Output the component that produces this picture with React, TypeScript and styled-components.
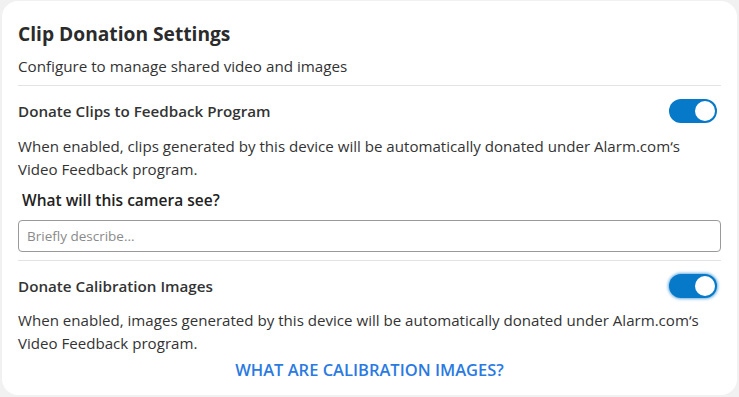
import React, { useState } from 'react';
import styled, { createGlobalStyle } from 'styled-components';

const GlobalStyle = createGlobalStyle`
  html, body {
    margin: 0;
    padding: 0;
    background: #f1f1f1;
  }
  body {
    font-family: "Open Sans", "Noto Sans", Arial, sans-serif;
    color: #333333;
  }
`;

const Card = styled.div`
  margin: 1px 2px 0 2px;
  height: 394px;
  box-sizing: border-box;
  background: #ffffff;
  border-radius: 16px;
  padding: 19px 16px 0 16px;
`;

const Title = styled.h2`
  margin: 0;
  font-size: 19.2px;
  font-weight: 700;
  line-height: 28px;
  color: #2b2b2b;
`;

const Subtitle = styled.p`
  margin: 7px 0 0;
  font-size: 15.2px;
  line-height: 22px;
`;

const Divider = styled.hr<{ top: number }>`
  border: none;
  border-top: 1px solid #e3e3e3;
  margin: ${(p) => p.top}px 0 0;
`;

const SettingRow = styled.div<{ top: number }>`
  display: flex;
  align-items: center;
  justify-content: space-between;
  padding-right: 4px;
  margin-top: ${(p) => p.top}px;
  height: 26px;
`;

const SettingLabel = styled.span`
  font-size: 15.2px;
  font-weight: 600;
  color: #333333;
`;

const Track = styled.button<{ on: boolean; focused?: boolean }>`
  width: 48px;
  height: 24px;
  border: none;
  padding: 0 2px;
  border-radius: 12px;
  background: ${(p) => (p.on ? '#0679c8' : '#bbbbbb')};
  display: flex;
  align-items: center;
  justify-content: ${(p) => (p.on ? 'flex-end' : 'flex-start')};
  cursor: pointer;
  box-shadow: ${(p) => (p.focused ? '0 0 3px 1px rgba(6,121,200,0.6)' : 'none')};
`;

const Knob = styled.span`
  width: 20px;
  height: 20px;
  border-radius: 50%;
  background: #ffffff;
`;

const Description = styled.p<{ top: number }>`
  margin: ${(p) => p.top}px 0 0;
  font-size: 15.1px;
  line-height: 22.5px;
`;

const FieldLabel = styled.label`
  display: block;
  margin: 9px 0 0 4px;
  font-size: 15.5px;
  font-weight: 600;
  line-height: 22px;
  color: #222222;
`;

const TextInput = styled.input`
  display: block;
  box-sizing: border-box;
  width: 100%;
  height: 32px;
  margin-top: 9px;
  padding: 0 8px;
  border: 1px solid #9a9a9a;
  border-radius: 4px;
  font-family: inherit;
  font-size: 13.5px;
  color: #333333;
  &::placeholder {
    color: #8a8a8a;
  }
`;

const LinkButton = styled.a`
  display: block;
  text-align: center;
  margin-top: 5px;
  font-size: 16.5px;
  font-weight: 600;
  line-height: 22px;
  color: #2a7ae2;
  text-decoration: none;
  cursor: pointer;
`;

function Toggle({ on, focused, onClick }: { on: boolean; focused?: boolean; onClick: () => void }) {
  return (
    <Track on={on} focused={focused} onClick={onClick}>
      <Knob />
    </Track>
  );
}

export default function App() {
  const [clips, setClips] = useState(true);
  const [calibration, setCalibration] = useState(true);

  return (
    <>
      <GlobalStyle />
      <Card>
        <Title>Clip Donation Settings</Title>
        <Subtitle>Configure to manage shared video and images</Subtitle>
        <Divider top={8} />

        <SettingRow top={12}>
          <SettingLabel>Donate Clips to Feedback Program</SettingLabel>
          <Toggle on={clips} onClick={() => setClips(!clips)} />
        </SettingRow>
        <Description top={11}>
          When enabled, clips generated by this device will be automatically donated under Alarm.com‘s
          <br />
          Video Feedback program.
        </Description>
        <FieldLabel>What will this camera see?</FieldLabel>
        <TextInput placeholder="Briefly describe..." />
        <Divider top={8} />

        <SettingRow top={12}>
          <SettingLabel>Donate Calibration Images</SettingLabel>
          <Toggle on={calibration} focused onClick={() => setCalibration(!calibration)} />
        </SettingRow>
        <Description top={10}>
          When enabled, images generated by this device will be automatically donated under Alarm.com‘s
          <br />
          Video Feedback program.
        </Description>
        <LinkButton>WHAT ARE CALIBRATION IMAGES?</LinkButton>
      </Card>
    </>
  );
}
